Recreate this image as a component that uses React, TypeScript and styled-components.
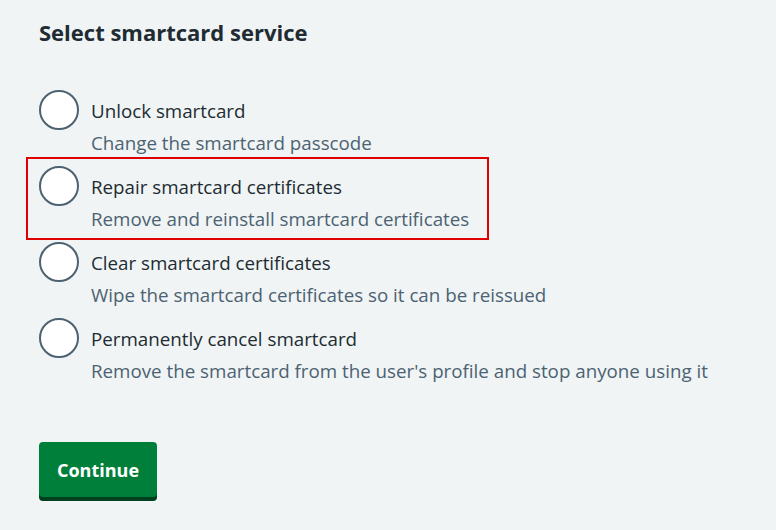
import styled, { createGlobalStyle } from "styled-components";

const GlobalStyle = createGlobalStyle`
  html, body {
    margin: 0;
    padding: 0;
    background: #f0f4f5;
  }
  body {
    font-family: "Open Sans", "Noto Sans", Arial, sans-serif;
    color: #212b32;
  }
`;

const Page = styled.main`
  width: 776px;
  height: 530px;
  box-sizing: border-box;
  padding: 16px 39px 0;
  background: #f0f4f5;
`;

const Fieldset = styled.fieldset`
  border: 0;
  margin: 0;
  padding: 0;
`;

const Legend = styled.legend`
  padding: 0;
  margin: 0 0 42px;
  font-size: 22px;
  line-height: 32px;
  font-weight: 700;
  color: #212b32;
`;

const RadioList = styled.div`
  display: flex;
  flex-direction: column;
  gap: 11px;
`;

const Item = styled.div<{ $highlight?: boolean }>`
  position: relative;
  display: flex;
  gap: 12px;
  &::after {
    content: "";
    display: ${(p) => (p.$highlight ? "block" : "none")};
    position: absolute;
    left: -13px;
    top: -9px;
    width: 463px;
    height: 83px;
    border: 2px solid #e00000;
    box-sizing: border-box;
    pointer-events: none;
  }
`;

const Circle = styled.span`
  flex: none;
  width: 40px;
  height: 40px;
  box-sizing: border-box;
  border: 2px solid #4c6272;
  border-radius: 50%;
  background: #ffffff;
`;

const Text = styled.div`
  display: flex;
  flex-direction: column;
  gap: 8px;
  padding-top: 9px;
`;

const Label = styled.span`
  font-size: 18.75px;
  line-height: 24px;
  color: #212b32;
`;

const Hint = styled.span`
  font-size: 18.75px;
  line-height: 24px;
  color: #4c6272;
`;

const Button = styled.button`
  margin-top: 59px;
  height: 55px;
  padding: 0 18px;
  border: 0;
  border-radius: 4px;
  background: #007f3b;
  box-shadow: 0 4px 0 #00401e;
  color: #ffffff;
  font-family: inherit;
  font-size: 18px;
  font-weight: 700;
  cursor: pointer;
`;

const options = [
  { label: "Unlock smartcard", hint: "Change the smartcard passcode" },
  {
    label: "Repair smartcard certificates",
    hint: "Remove and reinstall smartcard certificates",
    highlight: true,
  },
  {
    label: "Clear smartcard certificates",
    hint: "Wipe the smartcard certificates so it can be reissued",
  },
  {
    label: "Permanently cancel smartcard",
    hint: "Remove the smartcard from the user's profile and stop anyone using it",
  },
];

export default function App() {
  return (
    <>
      <GlobalStyle />
      <Page>
        <Fieldset>
          <Legend>Select smartcard service</Legend>
          <RadioList>
            {options.map((o) => (
              <Item key={o.label} $highlight={o.highlight}>
                <Circle />
                <Text>
                  <Label>{o.label}</Label>
                  <Hint>{o.hint}</Hint>
                </Text>
              </Item>
            ))}
          </RadioList>
        </Fieldset>
        <Button>Continue</Button>
      </Page>
    </>
  );
}
